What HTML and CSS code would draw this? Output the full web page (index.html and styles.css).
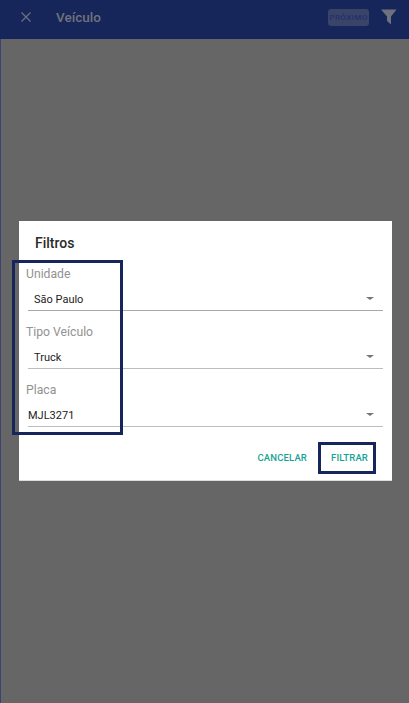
FILE: index.html
```html
<!DOCTYPE html>
<html lang="pt">
<head>
<meta charset="utf-8">
<title>Veículo</title>
<link rel="stylesheet" href="styles.css">
</head>
<body>
<div class="page">
  <header class="appbar">
    <svg class="close" width="12" height="12" viewBox="0 0 12 12"><path d="M1.5 1.5l9 9M10.500 1.500l-9 9" stroke="#70727c" stroke-width="1.1" fill="none"/></svg>
    <span class="title">Veículo</span>
    <span class="next">PRÓXIMO</span>
    <svg class="funnel" width="16" height="16" viewBox="0 0 16 16"><path d="M0 0.5h15.500L10 7.500V15.500L6 12V7.500z" fill="#6f717c"/></svg>
  </header>
  <main class="backdrop"></main>
</div>
<section class="dialog">
  <h2 class="dialog-title">Filtros</h2>
  <div class="field">
    <label class="label">Unidade</label>
    <div class="select indented"><span>São Paulo</span><i class="arrow"></i></div>
  </div>
  <div class="field">
    <label class="label">Tipo Veículo</label>
    <div class="select indented"><span>Truck</span><i class="arrow"></i></div>
  </div>
  <div class="field">
    <label class="label">Placa</label>
    <div class="select"><span>MJL3271</span><i class="arrow"></i></div>
  </div>
  <div class="actions">
    <button class="action">CANCELAR</button>
    <button class="action">FILTRAR</button>
  </div>
</section>
<div class="mark mark-fields"></div>
<div class="mark mark-button"></div>
</body>
</html>
```
FILE: styles.css
```css
* { box-sizing: border-box; }
html, body { margin: 0; height: 100%; }
body { font-family: Roboto, "Liberation Sans", sans-serif; background: #666; overflow: hidden; }
.page { display: flex; flex-direction: column; height: 703px; border-left: 1px solid #3c4272; }
.appbar { height: 39px; background: #16265a; display: flex; align-items: center; margin-left: -1px; padding: 0 15px 0 20px; }
.close { margin-right: 24px; flex: none; margin-top: -5px; }
.title { font-size: 13.5px; font-weight: 500; color: #70727c; flex: 1; margin-top: -6px; }
.next { font-size: 8px; font-weight: 500; letter-spacing: 0.4px; color: #22306a; background: #3a4468; border-radius: 3px; width: 41px; height: 17px; display: flex; align-items: center; justify-content: center; margin: -5px 0 0; }
.funnel { margin: -6px -3px 0 12px; flex: none; }
.backdrop { flex: 1; background: #666; }
.dialog { position: absolute; left: 19px; top: 221px; width: 373px; height: 260px; background: #fff; padding: 13px 9px 0 7px; border-bottom: 1px solid #ddd; }
.dialog-title { margin: 0 0 0 9px; font-size: 14px; font-weight: 500; line-height: 18px; color: #2a2a2a; height: 32px; }
.field { height: 58px; }
.label { display: block; font-size: 12.2px; line-height: 17px; color: #929292; height: 24px; }
.select { margin-left: 2px; height: 21px; padding: 2px 3px 0 0; border-bottom: 1.5px solid #bdbdbd; display: flex; justify-content: space-between; align-items: flex-start; font-size: 11px; line-height: 16px; color: #222; }
.select.indented { padding-left: 6px; }
.field:first-of-type .select { border-bottom-color: #a8a8a8; }
.arrow { width: 0; height: 0; border-left: 4px solid transparent; border-right: 4px solid transparent; border-top: 3.5px solid #757575; margin: 5px 6px 0 0; }
.actions { display: flex; justify-content: flex-end; gap: 24px; padding: 11px 15px 0 0; }
.action { border: 0; background: none; padding: 0; font: 500 9.5px/14px Roboto, "Liberation Sans", sans-serif; color: #16a394; letter-spacing: 0.15px; }
.mark { position: absolute; border: 3px solid #16265a; }
.mark-fields { left: 12px; top: 260px; width: 111px; height: 175px; }
.mark-button { left: 318px; top: 442px; width: 58px; height: 32px; }
```
